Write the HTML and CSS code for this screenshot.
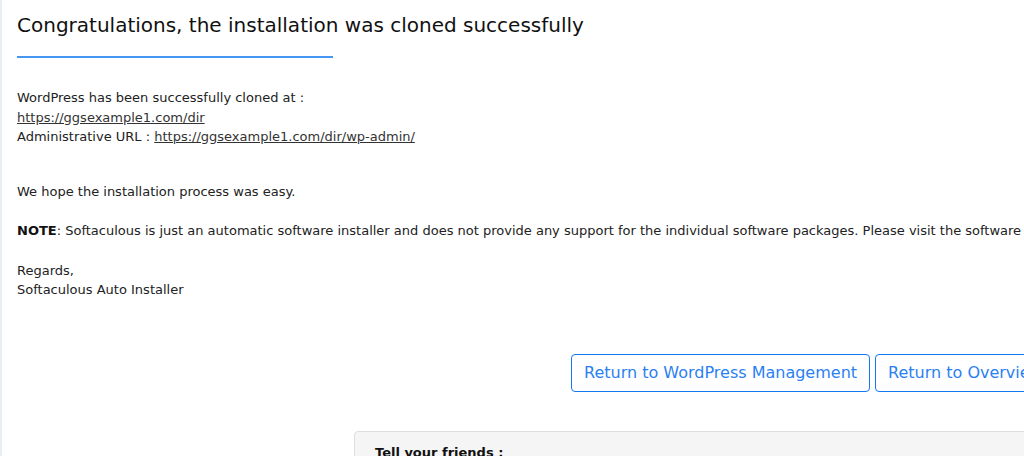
FILE: index.html
```html
<!DOCTYPE html>
<html>
  <head>
    <title>Clone - Softaculous</title>
    <link rel="stylesheet" href="styles.css">
  </head>

  <body>
    <div id="page">
      <div id="content">
        <h1 class="title">Congratulations, the installation was cloned successfully</h1>
        <div class="title-bar"></div>

        <div class="msg msg-links">
          WordPress has been successfully cloned at :<br>
          <a href="#">https://ggsexample1.com/dir</a><br>
          Administrative URL : <a href="#">https://ggsexample1.com/dir/wp-admin/</a>
        </div>

        <div class="msg msg-easy">We hope the installation process was easy.</div>

        <div class="msg msg-note">
          <b>NOTE</b>: Softaculous is just an automatic software installer and does not provide any support for the individual software packages. Please visit the software vendor's web site for support!
        </div>

        <div class="msg msg-regards">
          Regards,<br>
          Softaculous Auto Installer
        </div>

        <div id="buttons">
          <button class="btn-outline" type="button">Return to WordPress Management</button>
          <button class="btn-outline" type="button">Return to Overview</button>
        </div>

        <div id="share-panel">
          <div class="share-title">Tell your friends :</div>
        </div>
      </div>
    </div>
  </body>
</html>
```
FILE: styles.css
```css
* {
  box-sizing: border-box;
}

html,
body {
  margin: 0;
  height: 100%;
  overflow: hidden;
  background: #ffffff;
}

body {
  font-family: "DejaVu Sans", sans-serif;
  color: #222222;
  font-size: 13px;
}

#page {
  border-left: 2px solid #e9eef3;
  min-height: 100%;
}

#content {
  width: 1100px;
  padding: 13px 0 0 15px;
}

.title {
  margin: 0;
  font-size: 20px;
  line-height: 24px;
  font-weight: normal;
  color: #111111;
}

.title-bar {
  width: 316px;
  height: 2px;
  margin-top: 19px;
  background: #4597f1;
}

.msg {
  line-height: 19.5px;
  white-space: nowrap;
}

.msg a {
  color: #333333;
  text-decoration: underline;
}

.msg b {
  font-weight: bold;
  color: #111111;
}

.msg-links {
  margin-top: 30px;
}

.msg-easy {
  margin-top: 35px;
}

.msg-note {
  margin-top: 20px;
}

.msg-regards {
  margin-top: 20px;
}

#buttons {
  display: flex;
  gap: 5px;
  margin-top: 54px;
  padding-left: 554px;
}

.btn-outline {
  font-family: "DejaVu Sans", sans-serif;
  font-size: 16px;
  line-height: 24px;
  padding: 6px 12px;
  background: #ffffff;
  color: #2a7ff3;
  border: 1px solid #1479f0;
  border-radius: 4px;
  white-space: nowrap;
  cursor: pointer;
}

#share-panel {
  margin: 39px 0 0 337px;
  width: 700px;
  height: 80px;
  background: #f5f5f5;
  border: 1px solid #dedede;
  border-radius: 4px;
  padding: 13px 20px;
}

.share-title {
  font-weight: bold;
  font-size: 13px;
  color: #111111;
}
```
